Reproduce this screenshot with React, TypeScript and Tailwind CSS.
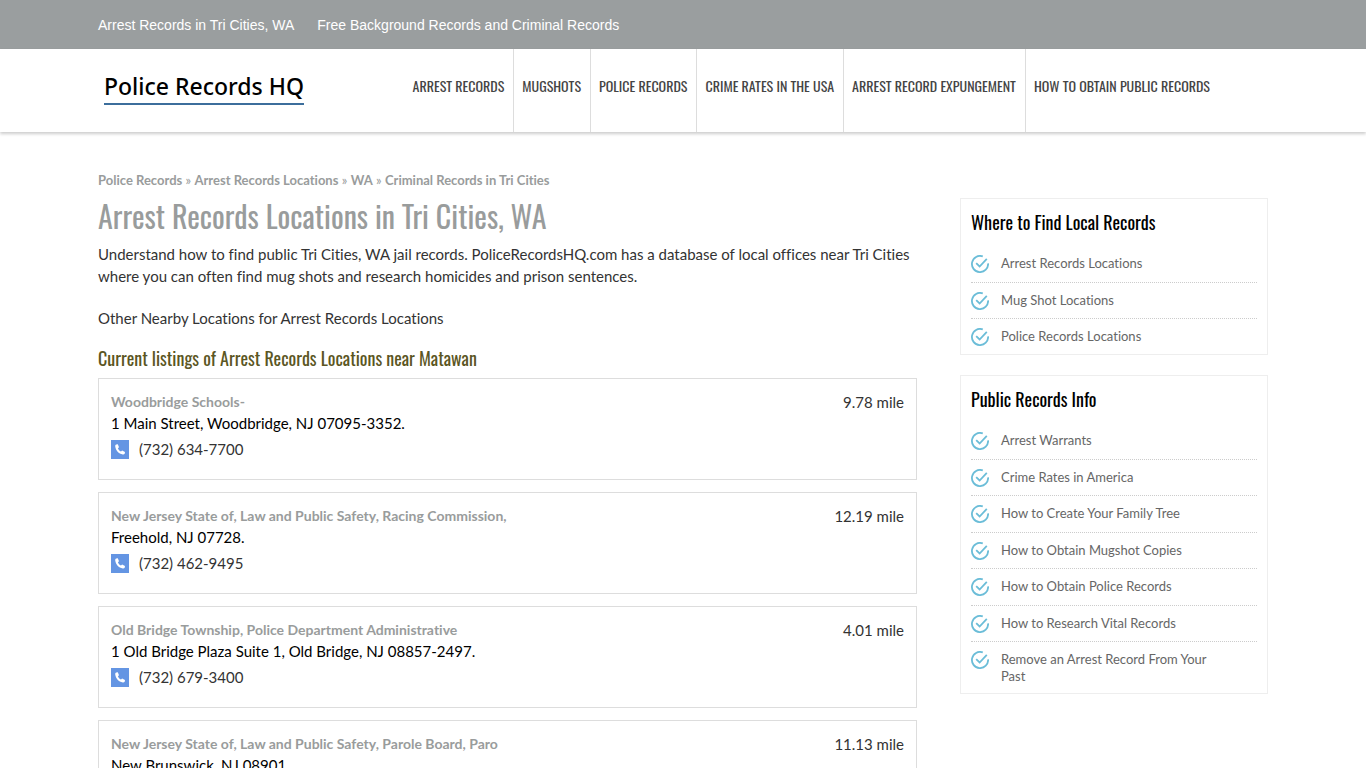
const navLinks = [
    "Arrest Records",
    "Mugshots",
    "Police Records",
    "Crime Rates in the USA",
    "Arrest Record Expungement",
    "How to Obtain Public Records",
];

const breadcrumbs = ["Police Records", "Arrest Records Locations", "WA", "Criminal Records in Tri Cities"];

const listings = [
    { name: "Woodbridge Schools-", address: "1 Main Street, Woodbridge, NJ 07095-3352.", phone: "(732) 634-7700", distance: "9.78 mile" },
    { name: "New Jersey State of, Law and Public Safety, Racing Commission,", address: "Freehold, NJ 07728.", phone: "(732) 462-9495", distance: "12.19 mile" },
    { name: "Old Bridge Township, Police Department Administrative", address: "1 Old Bridge Plaza Suite 1, Old Bridge, NJ 08857-2497.", phone: "(732) 679-3400", distance: "4.01 mile" },
    { name: "New Jersey State of, Law and Public Safety, Parole Board, Paro", address: "New Brunswick, NJ 08901.", phone: "", distance: "11.13 mile" },
];

const localRecords = ["Arrest Records Locations", "Mug Shot Locations", "Police Records Locations"];

const recordsInfo = [
    "Arrest Warrants",
    "Crime Rates in America",
    "How to Create Your Family Tree",
    "How to Obtain Mugshot Copies",
    "How to Obtain Police Records",
    "How to Research Vital Records",
    "Remove an Arrest Record From Your Past",
];

export default function App() {
    return (
        <div className="h-screen overflow-hidden bg-white font-[Lato,sans-serif] text-[15px] leading-[22px] text-[#333] [font-variant-ligatures:none]">
            <TopBar />
            <Header />
            <div className="mx-auto flex max-w-[1170px] items-start justify-between">
                <main className="w-[70%] pt-[38px]">
                    <Breadcrumbs />
                    <h1 className="mt-1 font-[Oswald,sans-serif] text-[30px] leading-[44px] text-[#999c9c]">
                        Arrest Records Locations in Tri Cities, WA
                    </h1>
                    <p className="mt-[5px]">
                        Understand how to find public Tri Cities, WA jail records. PoliceRecordsHQ.com has a database of local offices near Tri Cities where you can often find mug shots and research homicides and prison sentences.
                    </p>
                    <p className="mt-5">Other Nearby Locations for Arrest Records Locations</p>
                    <h2 className="mt-[18px] font-[Oswald,sans-serif] text-[18px] leading-[22px] text-[#5b5623]">
                        Current listings of Arrest Records Locations near Matawan
                    </h2>
                    <div className="mt-[9px] flex flex-col gap-3">
                        {listings.map((listing) => (
                            <Listing key={listing.name} {...listing} />
                        ))}
                    </div>
                </main>
                <aside className="flex w-[308px] flex-col gap-5 pt-[66px]">
                    <SideBox title="Where to Find Local Records" links={localRecords} />
                    <SideBox title="Public Records Info" links={recordsInfo} />
                </aside>
            </div>
        </div>
    );
}

function TopBar() {
    return (
        <div className="bg-[#9a9e9f]">
            <div className="mx-auto flex h-[49px] max-w-[1170px] items-center gap-[23px] font-['Liberation_Sans',Arial,sans-serif] text-sm text-white">
                <a href="#">Arrest Records in Tri Cities, WA</a>
                <a href="#">Free Background Records and Criminal Records</a>
            </div>
        </div>
    );
}

function Header() {
    return (
        <header className="bg-white shadow-[0_2px_3px_rgba(0,0,0,0.2)]">
            <div className="mx-auto flex max-w-[1170px] items-stretch">
                <a href="#" className="mt-[21px] ml-[6px] self-start border-b-2 border-[#3c6e9c] font-['Noto_Sans',sans-serif] text-[23px] leading-[33px] font-medium whitespace-nowrap text-black">
                    Police Records HQ
                </a>
                <nav className="ml-auto flex pr-[49px]">
                    {navLinks.map((link) => (
                        <a
                            key={link}
                            href="#"
                            className="flex h-[83px] items-center border-r border-[#ddd] pr-[9px] pb-[10px] pl-2 font-[Oswald,sans-serif] text-sm whitespace-nowrap text-[#444] uppercase last:border-r-0"
                        >
                            {link}
                        </a>
                    ))}
                </nav>
            </div>
        </header>
    );
}

function Breadcrumbs() {
    return (
        <nav aria-label="Breadcrumb" className="text-[13px] leading-5 text-[#999c9c]">
            {breadcrumbs.map((crumb, i) => (
                <span key={crumb}>
                    {i > 0 && " » "}
                    <a href="#" className="font-bold">{crumb}</a>
                </span>
            ))}
        </nav>
    );
}

function Listing({ name, address, phone, distance }: { name: string; address: string; phone: string; distance: string }) {
    return (
        <article className="flex h-[102px] items-start justify-between border border-[#ddd] px-3 pt-3">
            <div>
                <a href="#" className="block text-sm leading-[21px] font-bold text-[#999c9c]">{name}</a>
                <p className="text-black">{address}</p>
                {phone && (
                    <p className="mt-1 flex items-center gap-[10px]">
                        <PhoneIcon />
                        {phone}
                    </p>
                )}
            </div>
            <span>{distance}</span>
        </article>
    );
}

function SideBox({ title, links }: { title: string; links: string[] }) {
    return (
        <section className="border border-[#eee] px-[10px]">
            <h3 className="pt-[11px] font-[Oswald,sans-serif] text-[18px] leading-6 text-black">{title}</h3>
            <ul className="mt-3">
                {links.map((link) => (
                    <li key={link} className="border-b border-dotted border-[#ccc] pt-[9px] pb-2 last:border-b-0 not-last:odd:pb-[9px]">
                        <a href="#" className="flex gap-3 text-[13px] leading-[17px] text-[#666]">
                            <CheckIcon />
                            <span className="max-w-[220px]">{link}</span>
                        </a>
                    </li>
                ))}
            </ul>
        </section>
    );
}

function PhoneIcon() {
    return (
        <svg className="h-[19px] w-[18px] shrink-0" viewBox="0 0 18 19" aria-hidden="true">
            <rect width="18" height="19" fill="#6495e3" />
            <path
                d="M5.2 4.4 6.8 4.2 8 7.2 6.9 8.3C7.4 9.8 8.5 10.9 10 11.6L11.1 10.6 14 12.1 13.7 13.8C13.3 14.3 12.6 14.6 11.8 14.5 7.6 13.9 4.7 10.6 4.2 6.3 4.1 5.4 4.5 4.7 5.2 4.4Z"
                fill="#fff"
            />
        </svg>
    );
}

function CheckIcon() {
    return (
        <svg className="h-[18px] w-[18px] shrink-0" viewBox="0 0 18 18" fill="none" stroke="#6bbdd8" strokeWidth="1.8" aria-hidden="true">
            <path d="M11.8 1.4A8.1 8.1 0 1 0 17.1 8.4" />
            <path d="m5.2 8.2 3.4 3.3 7.2-7.7" />
        </svg>
    );
}
